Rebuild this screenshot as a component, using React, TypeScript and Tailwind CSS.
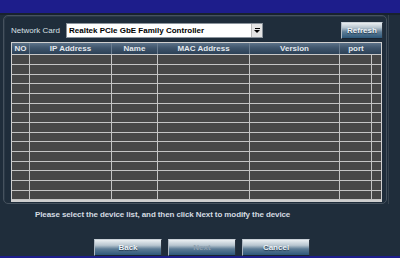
const COLS = "grid grid-cols-[18px_82px_46px_92px_90px_32px_10px]";
const ROW_HEIGHTS = [10, 10, 9, 10, 10, 9, 10, 10, 9, 10, 10, 9, 10, 10, 9];
const HEADERS = ["NO", "IP Address", "Name", "MAC Address", "Version"];

const font = "font-['Liberation_Sans',Arial,sans-serif]";

function Button({ label, disabled }: { label: string; disabled?: boolean }) {
  return (
    <div
      className={`w-[68px] h-[17px] flex items-center justify-center border border-t-[#c9d1d8] border-l-[#aeb8c2] border-r-[#2a3440] border-b-[#1a2430] bg-[linear-gradient(to_bottom,#e9eef1_0%,#b8c6d0_35%,#5d7c95_60%,#2d5779_100%)] text-[8px] font-bold ${
        disabled ? "text-[#8fa0ae]" : "text-[#eef3f7] [text-shadow:0_1px_1px_#22384c]"
      }`}
    >
      {label}
    </div>
  );
}

function Header() {
  return (
    <div className={`${COLS} h-[12px] bg-[linear-gradient(to_bottom,#5d7389_0%,#3f556c_45%,#2c4156_100%)] border-b border-[#c8c8c8]`}>
      {HEADERS.map((h) => (
        <div
          key={h}
          className="flex items-center justify-center border-r border-[#6a7d90] text-[8px] font-bold text-[#e4e9ee] leading-none"
        >
          {h}
        </div>
      ))}
      <div className="col-span-2 flex items-center justify-center pr-[10px] text-[8px] font-bold text-[#e4e9ee] leading-none">
        port
      </div>
    </div>
  );
}

function Row({ h }: { h: number }) {
  return (
    <div className={`${COLS} bg-[#474747] border-b border-[#c4c4c4]`} style={{ height: h }}>
      {[0, 1, 2, 3, 4, 5].map((i) => (
        <div key={i} className="border-r border-[#c4c4c4]" />
      ))}
      <div />
    </div>
  );
}

export default function App() {
  return (
    <div className={`w-[400px] h-[258px] bg-[#1f2d3b] flex flex-col overflow-hidden ${font}`}>
      <div className="h-[13px] bg-[#1d1d8b]" />
      <div className="h-[3px] bg-[#18222d]" />
      <div className="flex">
        <div className="ml-[3px] w-[384px] h-[189px] border border-[#46525e] rounded-[5px] bg-[#1f2d3b] pl-[7px] pt-[6px] shadow-[inset_1px_1px_0_#2b3947]">
          <div className="flex items-center h-[17px]">
            <div className="w-[55px] text-[8px] text-[#d9e0e6] leading-none">Network Card</div>
            <div className="w-[197px] h-[15px] bg-white border border-[#8a939c] flex items-center justify-between pl-[2px]">
              <span className="text-[8px] font-bold text-black leading-none">
                Realtek PCIe GbE Family Controller
              </span>
              <div className="w-[11px] h-[13px] bg-[#e4e4e4] border-l border-[#b8b8b8] flex flex-col items-center justify-center gap-[1px]">
                <div className="w-[5px] h-px bg-black" />
                <div className="w-0 h-0 border-l-[3px] border-r-[3px] border-t-[3px] border-l-transparent border-r-transparent border-t-black" />
              </div>
            </div>
            <div className="ml-[78px] w-[42px] h-[17px] flex items-center justify-center border border-t-[#c9d1d8] border-l-[#aeb8c2] border-r-[#2a3440] border-b-[#1a2430] bg-[linear-gradient(to_bottom,#e9eef1_0%,#b8c6d0_30%,#5d7c95_60%,#2d5779_100%)] text-[8px] font-bold text-[#eef3f7] [text-shadow:0_1px_1px_#22384c]">
              Refresh
            </div>
          </div>
          <div className="mt-[3px] w-[371px] border border-[#cfcfcf] border-b-2">
            <Header />
            {ROW_HEIGHTS.map((h, i) => (
              <Row key={i} h={h} />
            ))}
          </div>
        </div>
        <div className="ml-[1px] w-px h-[189px] bg-[#38444f]" />
      </div>
      <div className="mt-[4px] pl-[35px] h-[13px] flex items-center text-[8px] font-bold text-[#d4dbe1] leading-none tracking-[-0.1px]">
        Please select the device list, and then click Next to modify the device
      </div>
      <div className="mt-[18px] flex justify-center gap-[6px] pl-[4px]">
        <Button label="Back" />
        <Button label="Next" disabled />
        <Button label="Cancel" />
      </div>
      <div className="mt-auto h-[2px] bg-[#1d1d8b]" />
    </div>
  );
}
